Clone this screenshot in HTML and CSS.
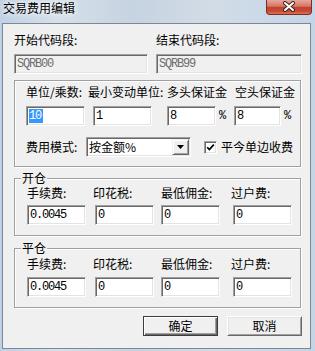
FILE: index.html
```html
<!DOCTYPE html>
<html lang="zh-CN">
<head>
    <meta charset="UTF-8">
    <title>交易费用编辑</title>
    <link rel="stylesheet" href="styles.css">
</head>
<body>
    <div class="window">
        <div class="titlebar">
            <span class="title">交易费用编辑</span>
            <span class="close">
                <svg width="14" height="11" viewBox="0 0 14 11">
                    <path d="M3 2 L11 9 M11 2 L3 9" stroke="#3b2622" stroke-width="4" stroke-linecap="round"/>
                    <path d="M3 2 L11 9 M11 2 L3 9" stroke="#fff" stroke-width="2" stroke-linecap="round"/>
                </svg>
            </span>
        </div>
        <div class="client">
            <div class="code-row">
                <div class="code-col first">
                    <div class="lbl">开始代码段:</div>
                    <div class="edit disabled w-code1">SQRB00</div>
                </div>
                <div class="code-col">
                    <div class="lbl">结束代码段:</div>
                    <div class="edit disabled w-code2">SQRB99</div>
                </div>
            </div>

            <div class="group params">
                <div class="row labels">
                    <span class="p1">单位/乘数:</span>
                    <span class="p2">最小变动单位:</span>
                    <span class="p3">多头保证金</span>
                    <span class="p4">空头保证金</span>
                </div>
                <div class="row edits">
                    <div class="edit w59"><span class="sel">10</span></div>
                    <div class="edit w59 gap8">1</div>
                    <div class="edit w49 gap15">8</div>
                    <span class="pct wide">%</span>
                    <div class="edit w47">8</div>
                    <span class="pct">%</span>
                </div>
                <div class="row mode">
                    <span class="mode-lbl">费用模式:</span>
                    <div class="combo">
                        <span class="combo-text">按金额%</span>
                        <span class="combo-btn">
                            <svg width="7" height="4" viewBox="0 0 7 4"><path d="M0 0 H7 L3.5 4 Z" fill="#000"/></svg>
                        </span>
                    </div>
                    <span class="check">
                        <svg width="9" height="9" viewBox="0 0 9 9"><path d="M1.2 4.2 L3.4 6.6 L7.8 1.6" fill="none" stroke="#000" stroke-width="1.7"/></svg>
                    </span>
                    <span class="check-lbl">平今单边收费</span>
                </div>
            </div>

            <fieldset class="group fee open">
                <legend>开仓</legend>
                <div class="fee-body">
                    <div class="row labels">
                        <span class="f1">手续费:</span>
                        <span class="f2">印花税:</span>
                        <span class="f3">最低佣金:</span>
                        <span>过户费:</span>
                    </div>
                    <div class="row edits">
                        <div class="edit w59">0.0045</div>
                        <div class="edit w59 gap9">0</div>
                        <div class="edit w59 gap7">0</div>
                        <div class="edit w59 gap13">0</div>
                    </div>
                </div>
            </fieldset>

            <fieldset class="group fee close-pos">
                <legend>平仓</legend>
                <div class="fee-body">
                    <div class="row labels">
                        <span class="f1">手续费:</span>
                        <span class="f2">印花税:</span>
                        <span class="f3">最低佣金:</span>
                        <span>过户费:</span>
                    </div>
                    <div class="row edits">
                        <div class="edit w59">0.0045</div>
                        <div class="edit w59 gap9">0</div>
                        <div class="edit w59 gap7">0</div>
                        <div class="edit w59 gap13">0</div>
                    </div>
                </div>
            </fieldset>

            <div class="buttons">
                <div class="btn default">确定</div>
                <div class="btn">取消</div>
            </div>
        </div>
    </div>
</body>
</html>
```

FILE: styles.css
```css
body {
    margin: 0;
    font-family: "Noto Sans CJK SC", "Liberation Sans", sans-serif;
    font-size: 12px;
    color: #000;
}

.window {
    width: 315px;
    height: 351px;
    overflow: hidden;
    background: linear-gradient(90deg, #bfd1e4 0%, #d6e0ea 18%, #c6d3e0 42%, #d2dce7 68%, #c4d5e7 100%);
}

/* title bar */
.titlebar {
    height: 23px;
    display: flex;
    justify-content: space-between;
    align-items: flex-start;
}
.title {
    margin: 1px 0 0 3px;
    line-height: 14px;
    text-shadow: 0 0 4px #fff, 0 0 7px #fff;
}
.close {
    width: 46px;
    height: 15px;
    margin-right: 3px;
    box-sizing: border-box;
    border: 1px solid #7a2d24;
    border-top: none;
    border-radius: 0 0 4px 4px;
    background: linear-gradient(#e8a79c, #d77565 45%, #c2412f 52%, #c84a36 80%, #dc7552);
    display: flex;
    align-items: center;
    justify-content: center;
}
.close svg {
    margin-top: -1px;
}

/* client area */
.client {
    margin-left: 2px;
    width: 309px;
    height: 326px;
    box-sizing: border-box;
    border: 1px solid #7c8896;
    background: #f0f0f0;
    padding: 9px 9px 0 11px;
}

.lbl,
.labels span,
.mode-lbl,
.check-lbl {
    line-height: 14px;
    white-space: nowrap;
}

.code-row {
    display: flex;
}
.code-col.first {
    width: 142px;
}
.code-col .edit {
    margin-top: 7px;
}
.w-code1 { width: 134px; }
.w-code2 { width: 146px; margin-right: -1px; }

/* edits */
.edit {
    box-sizing: border-box;
    height: 20px;
    background: #fff;
    border: 1px solid;
    border-color: #a0a0a0 #fff #fff #a0a0a0;
    box-shadow: inset 1px 1px 0 #696969, inset -1px -1px 0 #e3e3e3;
    padding: 2px 0 0 2px;
    font-family: "Liberation Mono", monospace;
    font-size: 12px;
    line-height: 14px;
    letter-spacing: -1.2px;
    white-space: nowrap;
    overflow: hidden;
}
.edit.disabled {
    background: #f0f0f0;
    color: #6d6d6d;
}
.sel {
    background: #3399ff;
    color: #fff;
    padding-right: 2px;
}
.w59 { width: 59px; }
.w49 { width: 49px; }
.w47 { width: 47px; }
.gap7 { margin-left: 7px; }
.gap8 { margin-left: 8px; }
.gap9 { margin-left: 9px; }
.gap13 { margin-left: 13px; }
.gap15 { margin-left: 15px; }

.pct {
    font-family: "Liberation Mono", monospace;
    font-size: 12px;
    line-height: 14px;
    margin-top: 3px;
    padding-left: 3px;
}
.pct.wide {
    width: 18px;
    box-sizing: border-box;
}

/* group boxes */
.group {
    border: 1px solid #a0a0a0;
    box-shadow: inset 1px 1px 0 #fff, 1px 1px 0 #fff;
}
.row {
    display: flex;
}

.params {
    margin-top: 6px;
    padding: 4px 0 9px 11px;
}
.params .edits {
    margin-top: 7px;
}
.p1 { width: 62px; }
.p2 { width: 79px; }
.p3 { width: 68px; }

.mode {
    margin-top: 11px;
    align-items: center;
}
.mode-lbl {
    width: 60px;
}
.combo {
    width: 105px;
    height: 20px;
    box-sizing: border-box;
    display: flex;
    background: #fff;
    border: 1px solid;
    border-color: #a0a0a0 #fff #fff #a0a0a0;
    box-shadow: inset 1px 1px 0 #696969, inset -1px -1px 0 #e3e3e3;
}
.combo-text {
    flex: 1;
    padding: 2px 0 0 2px;
    line-height: 14px;
}
.combo-btn {
    width: 17px;
    height: 16px;
    margin: 1px 1px 0 0;
    box-sizing: border-box;
    background: #f0f0f0;
    border: 1px solid;
    border-color: #f0f0f0 #696969 #696969 #f0f0f0;
    box-shadow: inset 1px 1px 0 #fff, inset -1px -1px 0 #a0a0a0;
    display: flex;
    align-items: center;
    justify-content: center;
}
.check {
    width: 13px;
    height: 13px;
    margin-left: 13px;
    box-sizing: border-box;
    background: #fff;
    border: 1px solid;
    border-color: #a0a0a0 #fff #fff #a0a0a0;
    box-shadow: inset 1px 1px 0 #696969, inset -1px -1px 0 #e3e3e3;
    display: flex;
    align-items: center;
    justify-content: center;
}
.check-lbl {
    margin-left: 4px;
}

fieldset.fee {
    margin: 4px 0 0;
    padding: 0;
    min-inline-size: 0;
}
.fee legend {
    margin-left: 6px;
    padding: 0 1px;
    line-height: 14px;
    background: #f0f0f0;
}
.fee-body {
    padding: 1px 0 10px 12px;
}
.open .edits {
    margin-top: 5px;
}
.close-pos {
    margin-top: 5px !important;
}
.close-pos .fee-body {
    padding-top: 2px;
}
.close-pos .edits {
    margin-top: 6px;
}
.f1 { width: 66px; }
.f2 { width: 68px; }
.f3 { width: 70px; }

/* buttons */
.buttons {
    display: flex;
    justify-content: flex-end;
    gap: 9px;
    margin: 8px -1px 0 0;
}
.btn {
    width: 75px;
    height: 20px;
    box-sizing: border-box;
    background: #f0f0f0;
    border: 1px solid;
    border-color: #fff #696969 #696969 #fff;
    box-shadow: inset 1px 1px 0 #e3e3e3, inset -1px -1px 0 #a0a0a0;
    text-align: center;
    line-height: 18px;
}
.btn.default {
    border-color: #3c3c3c;
    box-shadow: inset 1px 1px 0 #fff, inset -1px -1px 0 #696969, inset -2px -2px 0 #a0a0a0;
}
```
